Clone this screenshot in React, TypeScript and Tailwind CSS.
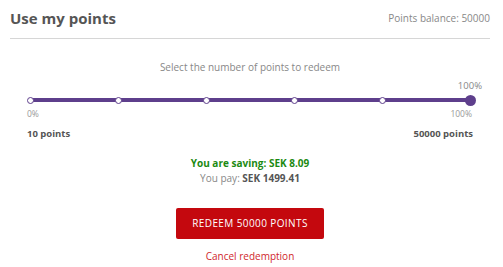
import React from "react";

const FONT = { fontFamily: '"Open Sans", "Liberation Sans", sans-serif' };

const STOPS = [0, 20, 40, 60, 80, 100];

function PointsSlider() {
  return (
    <div className="relative mx-[20px] h-[12px]">
      <div className="absolute left-0 right-0 top-[4px] h-[4px] bg-[#5e3f8c]" />
      <div className="relative flex h-full items-center justify-between">
        {STOPS.map((s) => (
          <div key={s} className="flex w-0 justify-center">
            {s === 100 ? (
              <div className="size-[11px] shrink-0 rounded-full bg-[#5e3f8c]" />
            ) : (
              <div className="size-[7px] shrink-0 rounded-full border border-[#5e3f8c] bg-white" />
            )}
          </div>
        ))}
      </div>
    </div>
  );
}

export default function App() {
  return (
    <div className="h-[267px] w-[503px] bg-white pl-[10px] pr-[13px] text-[#555]" style={FONT}>
      <div className="flex h-[39px] items-center justify-between border-b border-[#d6d6d6] pb-[2px]">
        <h2 className="text-[15px] font-bold text-[#555]">Use my points</h2>
        <span className="text-[10px] text-[#888]">Points balance: 50000</span>
      </div>

      <p className="mt-[21px] text-center text-[10px] text-[#888]">
        Select the number of points to redeem
      </p>

      <div className="mt-[4px] flex justify-end pr-[8px] text-[9.5px] text-[#888]">100%</div>
      <div className="mt-[1px]">
        <PointsSlider />
      </div>
      <div className="ml-[17px] mr-[18px] mt-[2px] flex justify-between text-[8.5px] text-[#999]">
        <span>0%</span>
        <span>100%</span>
      </div>
      <div className="ml-[17px] mr-[17px] mt-[6px] flex justify-between text-[9.5px] font-bold text-[#555]">
        <span>10 points</span>
        <span>50000 points</span>
      </div>

      <div className="mt-[15px] flex flex-col items-center text-[10px]">
        <p className="font-bold text-[#1c8a12]">You are saving: SEK 8.09</p>
        <p className="text-[#888]">
          You pay: <span className="font-bold text-[#555]">SEK 1499.41</span>
        </p>
      </div>

      <div className="mt-[22px] flex flex-col items-center">
        <button className="h-[31px] w-[148px] rounded-[2px] bg-[#c4080e] text-[10px] tracking-[0.4px] text-white">
          REDEEM 50000 POINTS
        </button>
        <button className="mt-[10px] text-[10px] text-[#d0272c]">Cancel redemption</button>
      </div>
    </div>
  );
}
